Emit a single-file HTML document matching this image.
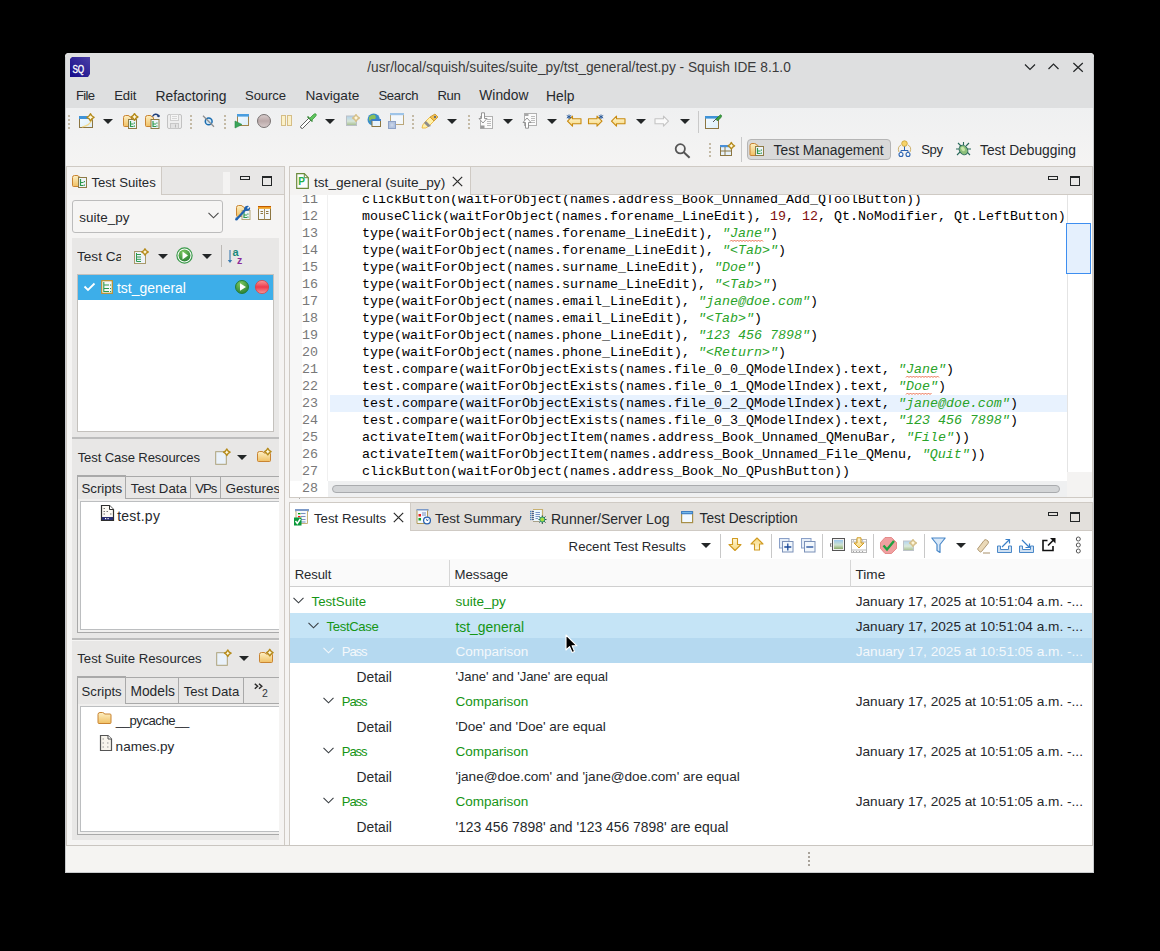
<!DOCTYPE html><html><head><meta charset="utf-8"><style>
*{margin:0;padding:0;box-sizing:border-box}
html,body{width:1160px;height:951px;overflow:hidden;background:#000}
body{position:relative;font-family:"Liberation Sans",sans-serif}
.a{position:absolute}
.t{position:absolute;white-space:nowrap;line-height:16px;font-family:"Liberation Sans",sans-serif}
.m{position:absolute;white-space:pre;font-family:"Liberation Mono",monospace;font-size:13.33px;line-height:17px;color:#000}
svg{position:absolute;overflow:visible}
</style></head><body>
<div class="a" style="left:65px;top:53px;width:1029px;height:820px;background:#f5f4f3;border-radius:4px 4px 0 0;"></div>
<div class="a" style="left:65px;top:53px;width:1029px;height:55px;background:#dedfe0;border-radius:4px 4px 0 0;"></div>
<svg style="left:70px;top:57px" width="20" height="20" viewBox="0 0 20 20"><defs><linearGradient id="sqg" x1="0" y1="1" x2="1" y2="0"><stop offset="0" stop-color="#140a8a"/><stop offset="1" stop-color="#4b3fa6"/></linearGradient></defs><path d="M2 0H20V17L18 20H0V2Z" fill="url(#sqg)"/><text x="2.4" y="16.1" font-family="Liberation Sans" font-size="10" fill="#fff" stroke="#fff" stroke-width="0.35" textLength="11.8" lengthAdjust="spacingAndGlyphs">SQ</text></svg>
<div class="t" style="left:367.3px;top:60px;font-size:13.71px;color:#3b3b3b;">/usr/local/squish/suites/suite_py/tst_general/test.py - Squish IDE 8.1.0</div>
<svg style="left:1024px;top:63px" width="60" height="10" viewBox="0 0 60 10" fill="none" stroke="#232627" stroke-width="1.2"><path d="M1 1.5L6 6.5L11 1.5"/><path d="M24.5 6L29.5 1L34.5 6"/><path d="M49.4 0L58.8 8.8M58.8 0L49.4 8.8"/></svg>
<div class="t" style="left:75.9px;top:88px;font-size:13.1px;color:#26292d;letter-spacing:-0.668px;">File</div>
<div class="t" style="left:114.3px;top:88px;font-size:13.1px;color:#26292d;letter-spacing:-0.157px;">Edit</div>
<div class="t" style="left:155.4px;top:88px;font-size:13.88px;color:#26292d;">Refactoring</div>
<div class="t" style="left:245.0px;top:88px;font-size:13.1px;color:#26292d;letter-spacing:-0.1px;">Source</div>
<div class="t" style="left:305.5px;top:88px;font-size:13.63px;color:#26292d;">Navigate</div>
<div class="t" style="left:378.4px;top:88px;font-size:13.1px;color:#26292d;letter-spacing:-0.28px;">Search</div>
<div class="t" style="left:437.4px;top:88px;font-size:13.1px;color:#26292d;letter-spacing:-0.363px;">Run</div>
<div class="t" style="left:479.3px;top:88px;font-size:13.8px;color:#26292d;">Window</div>
<div class="t" style="left:546.0px;top:88px;font-size:13.86px;color:#26292d;">Help</div>
<div class="a" style="left:65px;top:108px;width:1029px;height:58px;background:linear-gradient(#eff0f1,#f5f4f3);"></div>
<div class="a" style="left:66px;top:166px;width:219px;height:680px;border:1px solid #cfcac4;background:#f5f4f3;"></div>
<div class="a" style="left:67px;top:167px;width:217px;height:28px;background:#e8e7e6;border-bottom:1px solid #cfcac4;"></div>
<div class="a" style="left:67px;top:167px;width:95px;height:28px;background:#f4f3f2;border-right:1px solid #cfcac4;"></div>
<div class="a" style="left:223px;top:172px;width:7px;height:22px;background:#f4f3f2;"></div>
<div class="t" style="left:91.4px;top:175px;font-size:13.17px;color:#26292d;">Test Suites</div>
<div class="a" style="left:72px;top:200px;width:151px;height:33px;border:1px solid #bcbcbc;border-radius:3px;background:#f6f5f4;"></div>
<div class="t" style="left:79.3px;top:210px;font-size:13.45px;color:#26292d;">suite_py</div>
<svg style="left:208px;top:212px" width="11" height="7" viewBox="0 0 11 7" fill="none" stroke="#4a4a4a" stroke-width="1.1"><path d="M0.5 0.8L5.5 5.8L10.5 0.8"/></svg>
<div class="a" style="left:72px;top:238px;width:207px;height:199px;background:#e8e7e6;"></div>
<div class="t" style="left:77px;top:249px;font-size:13.6px;color:#26292d;width:44px;overflow:hidden;">Test Cases</div>
<div class="a" style="left:221px;top:245px;width:1px;height:22px;background:#bdbab6;"></div>
<div class="a" style="left:77px;top:274px;width:197px;height:158px;background:#fff;border:1px solid #c4c1bd;"></div>
<div class="a" style="left:78px;top:275px;width:195px;height:25px;background:#3daee9;"></div>
<div class="t" style="left:117.0px;top:280px;font-size:13.95px;color:#fff;">tst_general</div>
<div class="a" style="left:72px;top:439px;width:207px;height:200px;background:#e8e7e6;"></div>
<div class="t" style="left:77.7px;top:450px;font-size:13.1px;color:#26292d;letter-spacing:-0.122px;">Test Case Resources</div>
<div class="a" style="left:72px;top:437px;width:207px;height:2px;background:#bdbdbd;"></div><div class="a" style="left:125px;top:476px;width:154px;height:23px;border-top:1px solid #a9a9a9;border-bottom:1px solid #a9a9a9;"></div><div class="a" style="left:190px;top:476px;width:1px;height:23px;background:#a9a9a9;"></div><div class="a" style="left:220px;top:476px;width:1px;height:23px;background:#a9a9a9;"></div><div class="a" style="left:299px;top:476px;width:1px;height:23px;background:#a9a9a9;"></div><div class="a" style="left:77px;top:475px;width:49px;height:24px;border:1px solid #a9a9a9;border-top:2px solid #a9a9a9;border-bottom:none;"></div><div class="a" style="left:77px;top:499px;width:203px;height:134px;border:1px solid #a9a9a9;border-top:none;border-right:none;background:#f0efee;"></div><div class="a" style="left:80px;top:501px;width:199px;height:129px;border:1px solid #bcbec0;border-right:none;background:#fff;"></div><div class="t" style="left:81.4px;top:481px;font-size:13.32px;color:#26292d;">Scripts</div><div class="t" style="left:130.8px;top:481px;font-size:13.28px;color:#26292d;">Test Data</div><div class="t" style="left:195.2px;top:481px;font-size:13.1px;color:#26292d;letter-spacing:-1.013px;">VPs</div><div class="t" style="left:225.5px;top:481px;font-size:13.5px;color:#26292d;">Gestures</div>
<div class="a" style="left:279px;top:470px;width:5px;height:170px;background:#f5f4f3;"></div>
<div class="t" style="left:117.2px;top:508px;font-size:14.0px;color:#26292d;letter-spacing:0.243px;">test.py</div>
<div class="a" style="left:72px;top:641px;width:207px;height:199px;background:#e8e7e6;"></div>
<div class="t" style="left:77.3px;top:651px;font-size:13.17px;color:#26292d;">Test Suite Resources</div>
<div class="a" style="left:72px;top:638px;width:207px;height:2px;background:#bdbdbd;"></div><div class="a" style="left:125px;top:677px;width:154px;height:27px;border-top:1px solid #a9a9a9;border-bottom:1px solid #a9a9a9;"></div><div class="a" style="left:178px;top:677px;width:1px;height:27px;background:#a9a9a9;"></div><div class="a" style="left:243px;top:677px;width:1px;height:27px;background:#a9a9a9;"></div><div class="a" style="left:299px;top:677px;width:1px;height:27px;background:#a9a9a9;"></div><div class="a" style="left:77px;top:676px;width:49px;height:28px;border:1px solid #a9a9a9;border-top:2px solid #a9a9a9;border-bottom:none;"></div><div class="a" style="left:77px;top:704px;width:203px;height:131px;border:1px solid #a9a9a9;border-top:none;border-right:none;background:#f0efee;"></div><div class="a" style="left:80px;top:706px;width:199px;height:126px;border:1px solid #bcbec0;border-right:none;background:#fff;"></div><div class="t" style="left:81.6px;top:684px;font-size:13.12px;color:#26292d;">Scripts</div><div class="t" style="left:130.5px;top:684px;font-size:13.77px;color:#26292d;">Models</div><div class="t" style="left:183.7px;top:684px;font-size:13.18px;color:#26292d;">Test Data</div>
<div class="a" style="left:279px;top:670px;width:5px;height:170px;background:#f5f4f3;"></div>
<div class="t" style="left:115.81px;top:713px;font-size:13.1px;color:#26292d;letter-spacing:-0.45px;">__pycache__</div>
<div class="t" style="left:115.6px;top:739px;font-size:13.56px;color:#26292d;">names.py</div>
<div class="a" style="left:289px;top:166px;width:804px;height:332px;border:1px solid #cfcac4;background:#fff;"></div>
<div class="a" style="left:290px;top:167px;width:802px;height:28px;background:#e8e7e6;border-bottom:1px solid #cfcac4;"></div>
<div class="a" style="left:290px;top:167px;width:181px;height:28px;background:#f4f3f2;border-right:1px solid #cfcac4;"></div>
<div class="t" style="left:314.0px;top:175px;font-size:13.65px;color:#26292d;">tst_general (suite_py)</div>
<div class="a" style="left:290px;top:195px;width:12px;height:286px;background:#f7f7f7;"></div>
<div class="a" style="left:327px;top:195px;width:1px;height:286px;background:#f0f0f0;"></div>
<div class="a" style="left:290px;top:195px;width:777px;height:302px;overflow:hidden">
<div class="a" style="left:40px;top:200px;width:737px;height:17px;background:#e8f2fe;"></div>
<div class="m" style="left:12px;top:-4px;color:#787878">11</div>
<div class="m" style="left:72px;top:-4px">clickButton(waitForObject(names.address_Book_Unnamed_Add_QToolButton))</div>
<div class="m" style="left:12px;top:13px;color:#787878">12</div>
<div class="m" style="left:72px;top:13px">mouseClick(waitForObject(names.forename_LineEdit), <span style="color:#7f1010">19</span>, <span style="color:#7f1010">12</span>, Qt.NoModifier, Qt.LeftButton)</div>
<div class="m" style="left:12px;top:30px;color:#787878">13</div>
<div class="m" style="left:72px;top:30px">type(waitForObject(names.forename_LineEdit), <i style="color:#2aa32a">&quot;Jane&quot;</i>)</div>
<div class="m" style="left:12px;top:47px;color:#787878">14</div>
<div class="m" style="left:72px;top:47px">type(waitForObject(names.forename_LineEdit), <i style="color:#2aa32a">&quot;&lt;Tab&gt;&quot;</i>)</div>
<div class="m" style="left:12px;top:64px;color:#787878">15</div>
<div class="m" style="left:72px;top:64px">type(waitForObject(names.surname_LineEdit), <i style="color:#2aa32a">&quot;Doe&quot;</i>)</div>
<div class="m" style="left:12px;top:81px;color:#787878">16</div>
<div class="m" style="left:72px;top:81px">type(waitForObject(names.surname_LineEdit), <i style="color:#2aa32a">&quot;&lt;Tab&gt;&quot;</i>)</div>
<div class="m" style="left:12px;top:98px;color:#787878">17</div>
<div class="m" style="left:72px;top:98px">type(waitForObject(names.email_LineEdit), <i style="color:#2aa32a">&quot;jane@doe.com&quot;</i>)</div>
<div class="m" style="left:12px;top:115px;color:#787878">18</div>
<div class="m" style="left:72px;top:115px">type(waitForObject(names.email_LineEdit), <i style="color:#2aa32a">&quot;&lt;Tab&gt;&quot;</i>)</div>
<div class="m" style="left:12px;top:132px;color:#787878">19</div>
<div class="m" style="left:72px;top:132px">type(waitForObject(names.phone_LineEdit), <i style="color:#2aa32a">&quot;123 456 7898&quot;</i>)</div>
<div class="m" style="left:12px;top:149px;color:#787878">20</div>
<div class="m" style="left:72px;top:149px">type(waitForObject(names.phone_LineEdit), <i style="color:#2aa32a">&quot;&lt;Return&gt;&quot;</i>)</div>
<div class="m" style="left:12px;top:166px;color:#787878">21</div>
<div class="m" style="left:72px;top:166px">test.compare(waitForObjectExists(names.file_0_0_QModelIndex).text, <i style="color:#2aa32a">&quot;Jane&quot;</i>)</div>
<div class="m" style="left:12px;top:183px;color:#787878">22</div>
<div class="m" style="left:72px;top:183px">test.compare(waitForObjectExists(names.file_0_1_QModelIndex).text, <i style="color:#2aa32a">&quot;Doe&quot;</i>)</div>
<div class="m" style="left:12px;top:200px;color:#787878">23</div>
<div class="m" style="left:72px;top:200px">test.compare(waitForObjectExists(names.file_0_2_QModelIndex).text, <i style="color:#2aa32a">&quot;jane@doe.com&quot;</i>)</div>
<div class="m" style="left:12px;top:217px;color:#787878">24</div>
<div class="m" style="left:72px;top:217px">test.compare(waitForObjectExists(names.file_0_3_QModelIndex).text, <i style="color:#2aa32a">&quot;123 456 7898&quot;</i>)</div>
<div class="m" style="left:12px;top:234px;color:#787878">25</div>
<div class="m" style="left:72px;top:234px">activateItem(waitForObjectItem(names.address_Book_Unnamed_QMenuBar, <i style="color:#2aa32a">&quot;File&quot;</i>))</div>
<div class="m" style="left:12px;top:251px;color:#787878">26</div>
<div class="m" style="left:72px;top:251px">activateItem(waitForObjectItem(names.address_Book_Unnamed_File_QMenu, <i style="color:#2aa32a">&quot;Quit&quot;</i>))</div>
<div class="m" style="left:12px;top:268px;color:#787878">27</div>
<div class="m" style="left:72px;top:268px">clickButton(waitForObject(names.address_Book_No_QPushButton))</div>
<div class="m" style="left:12px;top:285px;color:#787878">28</div>
</div>
<svg style="left:0;top:0" width="1160" height="951"><path d="M730 241.5 l1.5 -1.5 l1.5 1.5 l1.5 -1.5 l1.5 1.5 l1.5 -1.5 l1.5 1.5 l1.5 -1.5 l1.5 1.5 l1.5 -1.5 l1.5 1.5 l1.5 -1.5 l1.5 1.5 l1.5 -1.5 l1.5 1.5 l1.5 -1.5 l1.5 1.5 l1.5 -1.5 l1.5 1.5 l1.5 -1.5 l1.5 1.5 l1.5 -1.5 l1.5 1.5" fill="none" stroke="#e8603c" stroke-width="0.9"/></svg>
<svg style="left:0;top:0" width="1160" height="951"><path d="M906 377.5 l1.5 -1.5 l1.5 1.5 l1.5 -1.5 l1.5 1.5 l1.5 -1.5 l1.5 1.5 l1.5 -1.5 l1.5 1.5 l1.5 -1.5 l1.5 1.5 l1.5 -1.5 l1.5 1.5 l1.5 -1.5 l1.5 1.5 l1.5 -1.5 l1.5 1.5 l1.5 -1.5 l1.5 1.5 l1.5 -1.5 l1.5 1.5 l1.5 -1.5 l1.5 1.5" fill="none" stroke="#e8603c" stroke-width="0.9"/></svg>
<svg style="left:0;top:0" width="1160" height="951"><path d="M906 394.5 l1.5 -1.5 l1.5 1.5 l1.5 -1.5 l1.5 1.5 l1.5 -1.5 l1.5 1.5 l1.5 -1.5 l1.5 1.5 l1.5 -1.5 l1.5 1.5 l1.5 -1.5 l1.5 1.5 l1.5 -1.5 l1.5 1.5 l1.5 -1.5 l1.5 1.5 l1.5 -1.5" fill="none" stroke="#e8603c" stroke-width="0.9"/></svg>
<div class="a" style="left:1067px;top:195px;width:1px;height:277px;background:#e4e4e4;"></div>
<div class="a" style="left:1067px;top:472px;width:25px;height:25px;background:#f4f3f2;"></div>
<div class="a" style="left:328px;top:481px;width:739px;height:16px;background:#eff0f1;"></div>
<div class="a" style="left:332px;top:485px;width:728px;height:8px;background:#d3d5d7;border:1px solid #a9abae;border-radius:4px;"></div>
<div class="a" style="left:1066px;top:223px;width:25px;height:51px;background:#e5f0fd;border:1.5px solid #3d8ef0;"></div>
<div class="a" style="left:289px;top:502px;width:804px;height:344px;border:1px solid #cfcac4;background:#fff;"></div>
<div class="a" style="left:290px;top:503px;width:802px;height:28px;background:#e3e0dc;border-bottom:1px solid #cfcac4;"></div>
<div class="a" style="left:290px;top:503px;width:121px;height:28px;background:#fff;border-right:1px solid #d0ccc6;"></div>
<div class="t" style="left:314.0px;top:511px;font-size:13.22px;color:#26292d;">Test Results</div>
<div class="t" style="left:435.0px;top:511px;font-size:13.55px;color:#26292d;">Test Summary</div>
<div class="t" style="left:551.0px;top:511px;font-size:14.0px;color:#26292d;letter-spacing:0.013px;">Runner/Server Log</div>
<div class="t" style="left:699.5px;top:511px;font-size:13.8px;color:#26292d;">Test Description</div>
<div class="t" style="left:568.6px;top:538.5px;font-size:13.21px;color:#26292d;">Recent Test Results</div>
<div class="a" style="left:290px;top:559px;width:802px;height:28px;background:#fafafa;border-bottom:1px solid #cfcfcf;"></div>
<div class="a" style="left:449px;top:560px;width:1px;height:27px;background:#d6d6d6;"></div>
<div class="a" style="left:850px;top:560px;width:1px;height:27px;background:#d6d6d6;"></div>
<div class="t" style="left:294.7px;top:567px;font-size:13.1px;color:#26292d;letter-spacing:-0.105px;">Result</div>
<div class="t" style="left:454.5px;top:567px;font-size:13.21px;color:#26292d;">Message</div>
<div class="t" style="left:855.5px;top:567px;font-size:13.6px;color:#26292d;">Time</div>
<svg style="left:293px;top:597px" width="11" height="7" viewBox="0 0 11 7" fill="none" stroke="#3a3f44" stroke-width="1.1"><path d="M0.5 0.8L5.5 5.8L10.5 0.8"/></svg>
<div class="t" style="left:311.5px;top:594px;font-size:13.25px;color:#159515;">TestSuite</div>
<div class="t" style="left:455.4px;top:594px;font-size:13.53px;color:#159515;">suite_py</div>
<div class="t" style="left:855.7px;top:594px;font-size:13.63px;color:#26292d;">January 17, 2025 at 10:51:04 a.m. -...</div>
<div class="a" style="left:290px;top:613px;width:802px;height:25px;background:#c5e4f6;"></div>
<svg style="left:308px;top:622px" width="11" height="7" viewBox="0 0 11 7" fill="none" stroke="#3a3f44" stroke-width="1.1"><path d="M0.5 0.8L5.5 5.8L10.5 0.8"/></svg>
<div class="t" style="left:326.6px;top:619px;font-size:13.1px;color:#159515;letter-spacing:-0.343px;">TestCase</div>
<div class="t" style="left:455.4px;top:619px;font-size:13.9px;color:#159515;">tst_general</div>
<div class="t" style="left:855.7px;top:619px;font-size:13.63px;color:#26292d;">January 17, 2025 at 10:51:04 a.m. -...</div>
<div class="a" style="left:290px;top:638px;width:802px;height:25px;background:#b5d9f0;"></div>
<svg style="left:323px;top:647px" width="11" height="7" viewBox="0 0 11 7" fill="none" stroke="#f4f8fb" stroke-width="1.1"><path d="M0.5 0.8L5.5 5.8L10.5 0.8"/></svg>
<div class="t" style="left:341.8px;top:644px;font-size:13.1px;color:#f4f8fb;letter-spacing:-1.107px;">Pass</div>
<div class="t" style="left:455.4px;top:644px;font-size:13.52px;color:#f4f8fb;">Comparison</div>
<div class="t" style="left:855.7px;top:644px;font-size:13.63px;color:#f4f8fb;">January 17, 2025 at 10:51:05 a.m. -...</div>
<div class="t" style="left:356.5px;top:669px;font-size:13.84px;color:#26292d;">Detail</div>
<div class="t" style="left:455.4px;top:669px;font-size:13.1px;color:#26292d;letter-spacing:-0.063px;">&#x27;Jane&#x27; and &#x27;Jane&#x27; are equal</div>
<svg style="left:323px;top:697px" width="11" height="7" viewBox="0 0 11 7" fill="none" stroke="#3a3f44" stroke-width="1.1"><path d="M0.5 0.8L5.5 5.8L10.5 0.8"/></svg>
<div class="t" style="left:341.8px;top:694px;font-size:13.1px;color:#159515;letter-spacing:-1.107px;">Pass</div>
<div class="t" style="left:455.4px;top:694px;font-size:13.52px;color:#159515;">Comparison</div>
<div class="t" style="left:855.7px;top:694px;font-size:13.63px;color:#26292d;">January 17, 2025 at 10:51:05 a.m. -...</div>
<div class="t" style="left:356.5px;top:719px;font-size:13.84px;color:#26292d;">Detail</div>
<div class="t" style="left:455.4px;top:719px;font-size:13.55px;color:#26292d;">&#x27;Doe&#x27; and &#x27;Doe&#x27; are equal</div>
<svg style="left:323px;top:747px" width="11" height="7" viewBox="0 0 11 7" fill="none" stroke="#3a3f44" stroke-width="1.1"><path d="M0.5 0.8L5.5 5.8L10.5 0.8"/></svg>
<div class="t" style="left:341.8px;top:744px;font-size:13.1px;color:#159515;letter-spacing:-1.107px;">Pass</div>
<div class="t" style="left:455.4px;top:744px;font-size:13.52px;color:#159515;">Comparison</div>
<div class="t" style="left:855.7px;top:744px;font-size:13.63px;color:#26292d;">January 17, 2025 at 10:51:05 a.m. -...</div>
<div class="t" style="left:356.5px;top:769px;font-size:13.84px;color:#26292d;">Detail</div>
<div class="t" style="left:455.4px;top:769px;font-size:13.6px;color:#26292d;">&#x27;jane@doe.com&#x27; and &#x27;jane@doe.com&#x27; are equal</div>
<svg style="left:323px;top:797px" width="11" height="7" viewBox="0 0 11 7" fill="none" stroke="#3a3f44" stroke-width="1.1"><path d="M0.5 0.8L5.5 5.8L10.5 0.8"/></svg>
<div class="t" style="left:341.8px;top:794px;font-size:13.1px;color:#159515;letter-spacing:-1.107px;">Pass</div>
<div class="t" style="left:455.4px;top:794px;font-size:13.52px;color:#159515;">Comparison</div>
<div class="t" style="left:855.7px;top:794px;font-size:13.63px;color:#26292d;">January 17, 2025 at 10:51:05 a.m. -...</div>
<div class="t" style="left:356.5px;top:819px;font-size:13.84px;color:#26292d;">Detail</div>
<div class="t" style="left:455.4px;top:819px;font-size:13.88px;color:#26292d;">&#x27;123 456 7898&#x27; and &#x27;123 456 7898&#x27; are equal</div>
<div class="a" style="left:65px;top:845px;width:1029px;height:28px;background:#f5f4f2;border-top:1px solid #c9c5c0;"></div>
<div class="a" style="left:808px;top:852px;width:2px;height:2px;background:#a9a39b;"></div>
<div class="a" style="left:808px;top:856px;width:2px;height:2px;background:#a9a39b;"></div>
<div class="a" style="left:808px;top:860px;width:2px;height:2px;background:#a9a39b;"></div>
<div class="a" style="left:808px;top:864px;width:2px;height:2px;background:#a9a39b;"></div>
<svg width="0" height="0" style="position:absolute"><defs>
<linearGradient id="gfold" x1="0" y1="0" x2="0" y2="1"><stop offset="0" stop-color="#fdf0c4"/><stop offset="1" stop-color="#f0c064"/></linearGradient>
<linearGradient id="gwin" x1="0" y1="0" x2="1" y2="1"><stop offset="0" stop-color="#f4fbff"/><stop offset="1" stop-color="#dceefa"/></linearGradient>
<linearGradient id="garrow" x1="0" y1="0" x2="0" y2="1"><stop offset="0" stop-color="#fff8d8"/><stop offset="1" stop-color="#f6d77e"/></linearGradient>
<radialGradient id="ggreen" cx="0.4" cy="0.25" r="0.85"><stop offset="0" stop-color="#7cc860"/><stop offset="1" stop-color="#237a30"/></radialGradient>
<linearGradient id="gred" x1="0" y1="0" x2="0" y2="1"><stop offset="0" stop-color="#f49a9a"/><stop offset="0.5" stop-color="#ee3a4c"/><stop offset="1" stop-color="#f49a9a"/></linearGradient>
<linearGradient id="ggray" x1="0" y1="0" x2="0" y2="1"><stop offset="0" stop-color="#d8cccc"/><stop offset="0.5" stop-color="#bba9a9"/><stop offset="1" stop-color="#d8cccc"/></linearGradient>
<linearGradient id="gimg" x1="0" y1="0" x2="0" y2="1"><stop offset="0" stop-color="#9cc8ec"/><stop offset="0.55" stop-color="#cfe3d0"/><stop offset="1" stop-color="#8aaa6a"/></linearGradient>
</defs></svg>
<div class="a" style="left:67.5px;top:114.5px;width:2px;height:2px;background:#c4baa6;"></div><div class="a" style="left:67.5px;top:118.7px;width:2px;height:2px;background:#c4baa6;"></div><div class="a" style="left:67.5px;top:122.9px;width:2px;height:2px;background:#c4baa6;"></div><div class="a" style="left:67.5px;top:127.1px;width:2px;height:2px;background:#c4baa6;"></div>
<svg style="left:78px;top:111px" width="18" height="18" viewBox="0 0 18 18"><rect x="1.5" y="5.5" width="13" height="11" fill="url(#gwin)" stroke="#8c7642"/><rect x="1" y="5" width="14" height="3" fill="#3f93d8"/><path d="M4 16C10 15 13 12 14 8" stroke="#f3d98a" fill="none" stroke-width="1.2"/><path d="M12.5 2.6999999999999997Q13.508000000000001 5.292 16.1 6.3Q13.508000000000001 7.308 12.5 9.9Q11.491999999999999 7.308 8.9 6.3Q11.491999999999999 5.292 12.5 2.6999999999999997Z" fill="#fff8dc" stroke="#b58b1c" stroke-width="1.4" stroke-linejoin="round"/></svg>
<svg style="left:103px;top:119px" width="10" height="5" viewBox="0 0 10 5"><path d="M0 0H10L5.0 5Z" fill="#232627"/></svg>
<svg style="left:122px;top:112px" width="17" height="18" viewBox="0 0 17 18"><path d="M1.5 5.5q0-2 2-2h2.5q1.5 0 2 1.5h0.5q1 0 1 1v7.5q0 1-1 1h-6q-1 0-1-1z" fill="url(#gfold)" stroke="#c98432" stroke-width="1"/><rect x="6.5" y="7.5" width="8" height="9" fill="#eef3f8" stroke="#8e7c46" stroke-width="1"/><path d="M8.5 9V14.5H11.5M8.5 12.0H11.5" fill="none" stroke="#2e9a4e" stroke-width="1.2"/><rect x="11.8" y="10.5" width="1.2" height="1.2" fill="#2e9a4e"/><rect x="11.8" y="13.5" width="1.2" height="1.2" fill="#2e9a4e"/><path d="M12.5 1.6Q13.452 4.048 15.9 5Q13.452 5.952 12.5 8.4Q11.548 5.952 9.1 5Q11.548 4.048 12.5 1.6Z" fill="#fff8dc" stroke="#b58b1c" stroke-width="1.4" stroke-linejoin="round"/></svg>
<svg style="left:144px;top:111px" width="17" height="19" viewBox="0 0 17 19"><path d="M1.5 6.5q0-2 2-2h2.5q1.5 0 2 1.5h0.5q1 0 1 1v7.5q0 1-1 1h-6q-1 0-1-1z" fill="url(#gfold)" stroke="#c98432" stroke-width="1"/><rect x="7.0" y="8.5" width="8" height="9" fill="#eef3f8" stroke="#8e7c46" stroke-width="1"/><path d="M9.0 10V15.5H12.0M9.0 13.0H12.0" fill="none" stroke="#2e9a4e" stroke-width="1.2"/><rect x="12.3" y="11.5" width="1.2" height="1.2" fill="#2e9a4e"/><rect x="12.3" y="14.5" width="1.2" height="1.2" fill="#2e9a4e"/><path d="M8.5 5.5q2.5-4 6-1" fill="none" stroke="#1f3f7a" stroke-width="1.4"/><circle cx="14.5" cy="5" r="1.3" fill="#1f3f7a"/></svg>
<svg style="left:167px;top:114px" width="15" height="15" viewBox="0 0 15 15"><rect x="0.5" y="0.5" width="14" height="14" rx="1.5" fill="#eeeeee" stroke="#c2c2c2"/><rect x="3.5" y="0.5" width="8" height="6" fill="#f6f6f6" stroke="#cfcfcf"/><path d="M5 2.5H10M5 4.5H10" stroke="#d6d6d6"/><rect x="3.5" y="9.5" width="8" height="5" fill="#e2e2e2" stroke="#c8c8c8"/><rect x="8" y="10.5" width="1" height="3" fill="#b8b8b8"/></svg>
<div class="a" style="left:189.5px;top:114.5px;width:2px;height:2px;background:#c4baa6;"></div><div class="a" style="left:189.5px;top:118.7px;width:2px;height:2px;background:#c4baa6;"></div><div class="a" style="left:189.5px;top:122.9px;width:2px;height:2px;background:#c4baa6;"></div><div class="a" style="left:189.5px;top:127.1px;width:2px;height:2px;background:#c4baa6;"></div>
<svg style="left:202px;top:115px" width="13" height="13" viewBox="0 0 13 13"><circle cx="6.7" cy="6.4" r="3.4" fill="#cfe6f6" stroke="#1b6db0" stroke-width="1.5"/><path d="M1 0.8L12 11.8" stroke="#8e8e8e" stroke-width="1.3"/></svg>
<div class="a" style="left:223.5px;top:114.5px;width:2px;height:2px;background:#c4baa6;"></div><div class="a" style="left:223.5px;top:118.7px;width:2px;height:2px;background:#c4baa6;"></div><div class="a" style="left:223.5px;top:122.9px;width:2px;height:2px;background:#c4baa6;"></div><div class="a" style="left:223.5px;top:127.1px;width:2px;height:2px;background:#c4baa6;"></div>
<svg style="left:234px;top:113px" width="16" height="16" viewBox="0 0 16 16"><rect x="3.5" y="1.5" width="11" height="11" fill="url(#gwin)" stroke="#a2844a"/><rect x="3" y="1" width="12" height="2.6" fill="#4a9ee0"/><path d="M1 8L8 11.5L1 15Z" fill="#3aa55a" stroke="#2a8a46" stroke-width="0.6"/></svg>
<svg style="left:256px;top:113px" width="16" height="16" viewBox="0 0 16 16"><circle cx="8" cy="8" r="6.5" fill="url(#ggray)" stroke="#7a7474" stroke-width="1"/></svg>
<svg style="left:280px;top:114px" width="13" height="13" viewBox="0 0 13 13"><rect x="1.5" y="1.5" width="4" height="10" fill="#fbf1c9" stroke="#d5bd86"/><rect x="7.5" y="1.5" width="4" height="10" fill="#fbf1c9" stroke="#d5bd86"/></svg>
<svg style="left:299px;top:112px" width="18" height="18" viewBox="0 0 18 18"><path d="M2 16L1.5 14.5L10 6L12 8L3.5 16.5Z" fill="#fff" stroke="#4d4d4d" stroke-width="0.9"/><path d="M8.5 4.5L13.5 9.5" stroke="#3a8a3a" stroke-width="1.6"/><path d="M10.5 6.5L14 3Q16 1 17 2Q18 3 16 5L12.5 8.5Z" fill="#5fc35f" stroke="#3a9a3a" stroke-width="0.8"/></svg>
<svg style="left:325px;top:119px" width="10" height="5" viewBox="0 0 10 5"><path d="M0 0H10L5.0 5Z" fill="#232627"/></svg>
<svg style="left:345px;top:113px" width="16" height="15" viewBox="0 0 16 15"><g opacity="0.75"><rect x="1.5" y="3" width="10" height="9.5" fill="url(#gimg)" stroke="#a8b0b8"/></g><path d="M11 1.6Q11.952 4.048 14.4 5Q11.952 5.952 11 8.4Q10.048 5.952 7.6 5Q10.048 4.048 11 1.6Z" fill="#fff8dc" stroke="#d6c08a" stroke-width="1.4" stroke-linejoin="round"/></svg>
<svg style="left:367px;top:113px" width="15" height="15" viewBox="0 0 15 15"><circle cx="6.7" cy="6.7" r="6.2" fill="#3b8fc8"/><path d="M2 4Q5 1 8 2Q10 5 7 7Q4 6 2 8Z" fill="#8ac05a"/><rect x="5" y="6.5" width="8.5" height="7" fill="#e8f3fb" stroke="#8c7642"/><rect x="4.5" y="6" width="9.5" height="2" fill="#3f7fcc"/></svg>
<svg style="left:387px;top:112px" width="18" height="18" viewBox="0 0 18 18"><rect x="3.5" y="1.5" width="13" height="11" fill="#f3f7fa" stroke="#bba77a"/><rect x="3" y="1" width="14" height="2.2" fill="#9ec4e8"/><rect x="1.5" y="9.5" width="7" height="7" fill="#b3c3de" stroke="#8ea2c7"/><rect x="3.5" y="11.5" width="3" height="3" fill="#c8d4e8"/></svg>
<div class="a" style="left:411.5px;top:114.5px;width:2px;height:2px;background:#c4baa6;"></div><div class="a" style="left:411.5px;top:118.7px;width:2px;height:2px;background:#c4baa6;"></div><div class="a" style="left:411.5px;top:122.9px;width:2px;height:2px;background:#c4baa6;"></div><div class="a" style="left:411.5px;top:127.1px;width:2px;height:2px;background:#c4baa6;"></div>
<svg style="left:421px;top:113px" width="18" height="16" viewBox="0 0 18 16"><path d="M1 15Q1 12 4 9L9 4L13 8L8 13Q5 16 1 15Z" fill="#fff0a8" stroke="#e8b030" stroke-width="0.8"/><path d="M5 8L10 13L7 14L3 10Z" fill="#8c8c8c"/><path d="M9 4L14 1L17 4L13 8Z" fill="#f0c050" stroke="#c8902a" stroke-width="0.8"/><circle cx="14" cy="4" r="0.9" fill="#2a4a8a"/></svg>
<svg style="left:447px;top:119px" width="10" height="5" viewBox="0 0 10 5"><path d="M0 0H10L5.0 5Z" fill="#232627"/></svg>
<div class="a" style="left:467.5px;top:114.5px;width:2px;height:2px;background:#c4baa6;"></div><div class="a" style="left:467.5px;top:118.7px;width:2px;height:2px;background:#c4baa6;"></div><div class="a" style="left:467.5px;top:122.9px;width:2px;height:2px;background:#c4baa6;"></div><div class="a" style="left:467.5px;top:127.1px;width:2px;height:2px;background:#c4baa6;"></div>
<svg style="left:478px;top:112px" width="16" height="17" viewBox="0 0 16 17"><rect x="2.5" y="4.5" width="12" height="12" fill="#fbfbfb" stroke="#b0b0b0"/><path d="M9 7.5H13M9 9.5H13M9 11.5H13M9 13.5H13" stroke="#b4b4b4" stroke-width="0.9"/><rect x="2.5" y="13.5" width="4" height="3" fill="#9a9a9a"/><path d="M3.5 0.8H6.5V6.5H9L5 11L1 6.5H3.5Z" fill="#fff" stroke="#8a8a8a" stroke-width="0.9" stroke-linejoin="round"/></svg>
<svg style="left:503px;top:119px" width="10" height="5" viewBox="0 0 10 5"><path d="M0 0H10L5.0 5Z" fill="#232627"/></svg>
<svg style="left:522px;top:112px" width="16" height="17" viewBox="0 0 16 17"><rect x="2.5" y="1.5" width="12" height="12" fill="#fbfbfb" stroke="#b0b0b0"/><path d="M9 4.5H13M9 6.5H13M9 8.5H13M9 10.5H13" stroke="#b4b4b4" stroke-width="0.9"/><rect x="2.5" y="1.5" width="4" height="2.5" fill="#a8a8a8"/><path d="M3.5 16.2H6.5V10.5H9L5 6L1 10.5H3.5Z" fill="#fff" stroke="#8a8a8a" stroke-width="0.9" stroke-linejoin="round"/></svg>
<svg style="left:547px;top:119px" width="10" height="5" viewBox="0 0 10 5"><path d="M0 0H10L5.0 5Z" fill="#232627"/></svg>
<svg style="left:566px;top:114px" width="16" height="14" viewBox="0 0 16 14"><path d="M1 6L6 1V3.5H14.5V8.5H6V11Z" transform="translate(0.5,1.2)" fill="url(#garrow)" stroke="#c88a10" stroke-width="1.1" stroke-linejoin="round"/><path d="M3 0.5V5M0.8 1.5L5.2 4M0.8 4L5.2 1.5" stroke="#2a5a9a" stroke-width="1"/></svg>
<svg style="left:587px;top:114px" width="17" height="14" viewBox="0 0 17 14"><path d="M1 6L6 1V3.5H14.5V8.5H6V11Z" transform="translate(16,1.2) scale(-1,1)" fill="url(#garrow)" stroke="#c88a10" stroke-width="1.1" stroke-linejoin="round"/><path d="M14 0.5V5M11.8 1.5L16.2 4M11.8 4L16.2 1.5" stroke="#2a5a9a" stroke-width="1"/></svg>
<svg style="left:610px;top:114px" width="16" height="14" viewBox="0 0 16 14"><path d="M1 6L6 1V3.5H14.5V8.5H6V11Z" transform="translate(0.5,1.2)" fill="url(#garrow)" stroke="#c88a10" stroke-width="1.1" stroke-linejoin="round"/></svg>
<svg style="left:636px;top:119px" width="10" height="5" viewBox="0 0 10 5"><path d="M0 0H10L5.0 5Z" fill="#232627"/></svg>
<svg style="left:654px;top:114px" width="16" height="14" viewBox="0 0 16 14"><path d="M1 6L6 1V3.5H14.5V8.5H6V11Z" transform="translate(15.5,1.2) scale(-1,1)" fill="#fafafa" stroke="#c4c4c4" stroke-width="1.1" stroke-linejoin="round"/></svg>
<svg style="left:680px;top:119px" width="10" height="5" viewBox="0 0 10 5"><path d="M0 0H10L5.0 5Z" fill="#232627"/></svg>
<div class="a" style="left:698px;top:111px;width:1px;height:22px;background:#c9c9c9;"></div>
<svg style="left:704px;top:113px" width="18" height="17" viewBox="0 0 18 17"><rect x="1.5" y="3.5" width="13" height="12" fill="url(#gwin)" stroke="#8c7642"/><rect x="1" y="3" width="14" height="2.6" fill="#3f93d8"/><path d="M9 9L14 4" stroke="#555" stroke-width="1"/><path d="M12 6L15.5 2.5Q17 1 17.5 2.5Q18 3.5 16.5 5L13.5 8Z" fill="#3aa040" stroke="#2a7a30" stroke-width="0.7"/></svg>
<svg style="left:674px;top:143px" width="17" height="16" viewBox="0 0 17 16"><circle cx="6.3" cy="5.8" r="4.6" fill="none" stroke="#555" stroke-width="1.8"/><path d="M9.8 9.3L15.6 14.8" stroke="#555" stroke-width="2"/></svg>
<div class="a" style="left:708.5px;top:142.5px;width:2px;height:2px;background:#c4baa6;"></div><div class="a" style="left:708.5px;top:146.6px;width:2px;height:2px;background:#c4baa6;"></div><div class="a" style="left:708.5px;top:150.7px;width:2px;height:2px;background:#c4baa6;"></div><div class="a" style="left:708.5px;top:154.8px;width:2px;height:2px;background:#c4baa6;"></div>
<svg style="left:719px;top:142px" width="16" height="15" viewBox="0 0 16 15"><rect x="1.5" y="3.5" width="11" height="10" fill="#e6f2fb" stroke="#8c7642"/><rect x="1" y="3" width="12" height="2.2" fill="#4a90d8"/><path d="M1.5 9H12.5M6 5V13.5" stroke="#8c7642"/><path d="M12.3 0.5Q13.224 2.876 15.600000000000001 3.8Q13.224 4.724 12.3 7.1Q11.376000000000001 4.724 9.0 3.8Q11.376000000000001 2.876 12.3 0.5Z" fill="#fff8dc" stroke="#b58b1c" stroke-width="1.4" stroke-linejoin="round"/></svg>
<div class="a" style="left:741px;top:137px;width:1px;height:25px;background:#c8c8c8;"></div>
<div class="a" style="left:747px;top:139px;width:144px;height:21px;background:#d9d9d9;border:1px solid #b5b5b5;border-radius:4px;"></div>
<svg style="left:748px;top:142px" width="18" height="15" viewBox="0 0 18 15"><path d="M2.0 3.5q0-2 2-2h2.5q1.5 0 2 1.5h0.5q1 0 1 1v8.5q0 1-1 1h-6q-1 0-1-1z" fill="url(#gfold)" stroke="#c98432" stroke-width="1"/><rect x="7.5" y="4.5" width="8" height="9" fill="#eef3f8" stroke="#8e7c46" stroke-width="1"/><path d="M9.5 6V11.5H12.5M9.5 9.0H12.5" fill="none" stroke="#2e9a4e" stroke-width="1.2"/><rect x="12.8" y="7.5" width="1.2" height="1.2" fill="#2e9a4e"/><rect x="12.8" y="10.5" width="1.2" height="1.2" fill="#2e9a4e"/></svg>
<div class="t" style="left:773.6px;top:142px;font-size:13.85px;color:#26292d;">Test Management</div>
<svg style="left:897px;top:140px" width="15" height="18" viewBox="0 0 15 18"><circle cx="7.5" cy="3.6" r="2.8" fill="#f6d36a" stroke="#c8a032" stroke-width="0.8"/><path d="M2 12Q0 7 4 5M13 12Q15 7 11 5" fill="none" stroke="#c8a85a" stroke-width="0.9"/><path d="M7.5 6.5V10.5M4 13V10.5H11V13" fill="none" stroke="#2a62b0" stroke-width="1"/><circle cx="4" cy="14.5" r="2" fill="#fff" stroke="#2a62b0" stroke-width="1.1"/><circle cx="11" cy="14.5" r="2" fill="#fff" stroke="#2a62b0" stroke-width="1.1"/></svg>
<div class="t" style="left:921.2px;top:142px;font-size:13.1px;color:#26292d;letter-spacing:-0.386px;">Spy</div>
<svg style="left:955px;top:141px" width="17" height="17" viewBox="0 0 17 17"><path d="M3 2L6 5M14 2L11 5M1 8H5M16 8H12M2 14L5 11M15 14L12 11M8.5 1V4" stroke="#2a6a5a" stroke-width="1.1"/><ellipse cx="8.5" cy="9" rx="4" ry="5" fill="#8cbf7a" stroke="#2a6a5a" stroke-width="1" transform="rotate(-35 8.5 9)"/><ellipse cx="8" cy="8" rx="1.6" ry="2.5" fill="#c8e6a8" transform="rotate(-35 8 8)"/></svg>
<div class="t" style="left:980.0px;top:142px;font-size:13.81px;color:#26292d;">Test Debugging</div>
<svg style="left:71px;top:174px" width="17" height="15" viewBox="0 0 17 15"><path d="M1.5 3.5q0-2 2-2h2.5q1.5 0 2 1.5h0.5q1 0 1 1v7.5q0 1-1 1h-6q-1 0-1-1z" fill="url(#gfold)" stroke="#c98432" stroke-width="1"/><rect x="7.5" y="3.5" width="8" height="10" fill="#eef3f8" stroke="#8e7c46" stroke-width="1"/><path d="M9.5 5V11.5H12.5M9.5 8.5H12.5" fill="none" stroke="#2e9a4e" stroke-width="1.2"/><rect x="12.8" y="7.0" width="1.2" height="1.2" fill="#2e9a4e"/><rect x="12.8" y="10.5" width="1.2" height="1.2" fill="#2e9a4e"/></svg>
<div class="a" style="left:240px;top:176px;width:10px;height:4px;border:1.3px solid #232627;"></div><div class="a" style="left:262px;top:176px;width:10px;height:10px;border:1.3px solid #232627;border-top-width:2.5px;"></div>
<svg style="left:234px;top:204px" width="18" height="18" viewBox="0 0 18 18"><path d="M2.5 3.5q0-2 2-2h2.5q1.5 0 2 1.5h0.5q1 0 1 1v7.5q0 1-1 1h-6q-1 0-1-1z" fill="url(#gfold)" stroke="#c98432" stroke-width="1"/><rect x="8.0" y="6.5" width="8" height="9" fill="#eef3f8" stroke="#b5a77a" stroke-width="1"/><path d="M10.0 8V13.5H13.0M10.0 11.0H13.0" fill="none" stroke="#2e9a4e" stroke-width="1.2"/><rect x="13.3" y="9.5" width="1.2" height="1.2" fill="#2e9a4e"/><rect x="13.3" y="12.5" width="1.2" height="1.2" fill="#2e9a4e"/><path d="M2 16L12 5" stroke="#1e62b0" stroke-width="2.2"/><path d="M10 5Q11 1 15 2L13 4L14 5L16 3Q17 7 12 7Z" fill="#1e62b0"/><path d="M4 15L1 16.5L2 13Z" fill="#1e62b0"/></svg>
<svg style="left:257px;top:205px" width="15" height="16" viewBox="0 0 15 16"><rect x="1.5" y="1.5" width="12" height="13" fill="#f3f8fb" stroke="#8c7642"/><rect x="1" y="1" width="13" height="2.8" fill="#f0a020"/><rect x="1" y="1" width="13" height="1" fill="#c05a00"/><path d="M7.5 4V14.5" stroke="#a89060"/><path d="M3.5 6.5H6M3.5 8.5H6M9 6.5H11.5M9 8.5H11.5" stroke="#8c7642" stroke-width="1"/></svg>
<svg style="left:133px;top:248px" width="16" height="17" viewBox="0 0 16 17"><rect x="1.5" y="3.5" width="11" height="12" fill="#eef3f8" stroke="#a8996a"/><path d="M3.5 5V13.5H8M3.5 9H8M3.5 11.3H8M3.5 6.5H8" fill="none" stroke="#2e9a4e" stroke-width="1"/><path d="M12 0.7999999999999998Q12.896 3.104 15.2 4Q12.896 4.896 12 7.2Q11.104 4.896 8.8 4Q11.104 3.104 12 0.7999999999999998Z" fill="#fff8dc" stroke="#b58b1c" stroke-width="1.4" stroke-linejoin="round"/></svg>
<svg style="left:158px;top:254px" width="10" height="5" viewBox="0 0 10 5"><path d="M0 0H10L5.0 5Z" fill="#232627"/></svg>
<svg style="left:176px;top:247px" width="17" height="17" viewBox="0 0 17 17"><circle cx="8.5" cy="8.5" r="7.6" fill="#fff" stroke="#3a9a4a" stroke-width="1.2"/><circle cx="8.5" cy="8.5" r="6" fill="url(#ggreen)"/><path d="M6.5 4.5L12 8.5L6.5 12.5Z" fill="#fff"/></svg>
<svg style="left:202px;top:254px" width="10" height="5" viewBox="0 0 10 5"><path d="M0 0H10L5.0 5Z" fill="#232627"/></svg>
<svg style="left:227px;top:246px" width="19" height="20" viewBox="0 0 19 20"><path d="M3 4V16" stroke="#3a7ab0" stroke-width="1.1"/><path d="M0.8 14L3 17L5.2 14Z" fill="#3a7ab0"/><text x="5.6" y="9.8" font-family="Liberation Sans" font-weight="bold" font-size="11" fill="#1a8a7a">a</text><text x="10" y="18" font-family="Liberation Sans" font-weight="bold" font-size="10.5" fill="#8a2a9a">z</text></svg>
<svg style="left:83px;top:282px" width="13" height="10" viewBox="0 0 13 10"><path d="M1.5 4.5L5 8L11.5 1.5" fill="none" stroke="#fff" stroke-width="1.8"/></svg>
<svg style="left:101px;top:280px" width="12" height="14" viewBox="0 0 12 14"><rect x="0.7" y="0.7" width="10.6" height="12.6" fill="#f4f8fb" stroke="#c0902a" stroke-width="1.2"/><path d="M2.8 2V11.5H8M2.8 5H8M2.8 8.5H8" fill="none" stroke="#2e9a4e" stroke-width="1.1"/><rect x="9" y="4.5" width="1.1" height="1.1" fill="#2e9a4e"/><rect x="9" y="8" width="1.1" height="1.1" fill="#2e9a4e"/><rect x="9" y="11" width="1.1" height="1.1" fill="#2e9a4e"/></svg>
<svg style="left:235px;top:280px" width="14" height="14" viewBox="0 0 14 14"><circle cx="7" cy="7" r="6.5" fill="url(#ggreen)" stroke="#1f7a30" stroke-width="0.9"/><path d="M5 3.2L11 7L5 10.8Z" fill="#fff"/></svg>
<svg style="left:255px;top:280px" width="14" height="14" viewBox="0 0 14 14"><circle cx="7" cy="7" r="6.6" fill="url(#gred)" stroke="#e03a3a" stroke-width="0.7"/></svg>
<svg style="left:215px;top:448px" width="16" height="17" viewBox="0 0 16 17"><rect x="0.7" y="3.7" width="10.6" height="12.6" fill="#eaf2fa" stroke="#aca27a" stroke-width="1"/><path d="M11.8 0.9000000000000004Q12.724 3.2760000000000002 15.100000000000001 4.2Q12.724 5.1240000000000006 11.8 7.5Q10.876000000000001 5.1240000000000006 8.5 4.2Q10.876000000000001 3.2760000000000002 11.8 0.9000000000000004Z" fill="#fff8dc" stroke="#b58b1c" stroke-width="1.4" stroke-linejoin="round"/></svg>
<svg style="left:237px;top:455px" width="10" height="5" viewBox="0 0 10 5"><path d="M0 0H10L5.0 5Z" fill="#232627"/></svg>
<svg style="left:256px;top:448px" width="16" height="14" viewBox="0 0 16 14"><path d="M1.5 5.5q0-2 2-2h2.5q1.5 0 2 1.5h5.5q1 0 1 1v6.5q0 1-1 1h-11q-1 0-1-1z" fill="url(#gfold)" stroke="#c98432" stroke-width="1"/><path d="M11.8 0.30000000000000027Q12.724 2.676 15.100000000000001 3.6Q12.724 4.524 11.8 6.9Q10.876000000000001 4.524 8.5 3.6Q10.876000000000001 2.676 11.8 0.30000000000000027Z" fill="#fff8dc" stroke="#b58b1c" stroke-width="1.4" stroke-linejoin="round"/></svg>
<svg style="left:100px;top:504px" width="15" height="18" viewBox="0 0 15 18"><path d="M1.5 1.5H9.5L13.5 5.5V16.5H1.5Z" fill="#fdfaf4" stroke="#2e2e2e" stroke-width="1.2"/><path d="M9.5 1.5V5.5H13.5" fill="#fff" stroke="#2e2e2e" stroke-width="1"/><rect x="2" y="13" width="11" height="3" fill="#2a2f72"/><rect x="5" y="14" width="1.2" height="1.2" fill="#fff"/><rect x="7.5" y="14" width="1.2" height="1.2" fill="#fff"/><path d="M3.5 4.5H5M3.5 7.5H5M6.5 7.5H8M3.5 10H5M10 10H11.5" stroke="#777" stroke-width="1"/></svg>
<svg style="left:216px;top:649px" width="16" height="17" viewBox="0 0 16 17"><rect x="0.7" y="3.7" width="10.6" height="12.6" fill="#eaf2fa" stroke="#aca27a" stroke-width="1"/><path d="M11.8 0.9000000000000004Q12.724 3.2760000000000002 15.100000000000001 4.2Q12.724 5.1240000000000006 11.8 7.5Q10.876000000000001 5.1240000000000006 8.5 4.2Q10.876000000000001 3.2760000000000002 11.8 0.9000000000000004Z" fill="#fff8dc" stroke="#b58b1c" stroke-width="1.4" stroke-linejoin="round"/></svg>
<svg style="left:239px;top:656px" width="10" height="5" viewBox="0 0 10 5"><path d="M0 0H10L5.0 5Z" fill="#232627"/></svg>
<svg style="left:258px;top:649px" width="16" height="14" viewBox="0 0 16 14"><path d="M1.5 5.5q0-2 2-2h2.5q1.5 0 2 1.5h5.5q1 0 1 1v6.5q0 1-1 1h-11q-1 0-1-1z" fill="url(#gfold)" stroke="#c98432" stroke-width="1"/><path d="M11.8 0.30000000000000027Q12.724 2.676 15.100000000000001 3.6Q12.724 4.524 11.8 6.9Q10.876000000000001 4.524 8.5 3.6Q10.876000000000001 2.676 11.8 0.30000000000000027Z" fill="#fff8dc" stroke="#b58b1c" stroke-width="1.4" stroke-linejoin="round"/></svg>
<svg style="left:254px;top:683px" width="11" height="7" viewBox="0 0 11 7"><path d="M0.8 0.8L3.6 3.3L0.8 5.8M5 0.8L7.8 3.3L5 5.8" fill="none" stroke="#2b2b2b" stroke-width="1.5"/></svg>
<div class="t" style="left:262px;top:685px;font-size:10.5px;color:#31363b;">2</div>
<svg style="left:97px;top:711px" width="15" height="14" viewBox="0 0 15 14"><path d="M1.0 3.5q0-2 2-2h2.5q1.5 0 2 1.5h5.5q1 0 1 1v7.5q0 1-1 1h-11q-1 0-1-1z" fill="url(#gfold)" stroke="#c98432" stroke-width="1"/></svg>
<svg style="left:99px;top:734px" width="14" height="18" viewBox="0 0 14 18"><path d="M1.5 1.5H9L12.5 5V16.5H1.5Z" fill="#f8f4ec" stroke="#555" stroke-width="1.2"/><path d="M9 1.5V5H12.5" fill="#fff" stroke="#555"/><path d="M3.5 5H5M3.5 9H5M8 9H9.5M3.5 13H5M8 13H9.5" stroke="#999"/></svg>
<svg style="left:296px;top:173px" width="13" height="16" viewBox="0 0 13 16"><path d="M0.7 0.7H8.3L12.3 4.7V15.3H0.7Z" fill="#fbfcff" stroke="#6a8a3a" stroke-width="1.2"/><path d="M8.3 0.7V4.7H12.3" fill="none" stroke="#6a8a3a" stroke-width="1"/><text x="2.2" y="12.3" font-family="Liberation Sans" font-weight="bold" font-size="10" fill="#22b04a">P</text></svg>
<svg style="left:452px;top:176px" width="11" height="11" viewBox="0 0 11 11"><path d="M0.8 0.8L10.2 10.2M10.2 0.8L0.8 10.2" stroke="#2b2b2b" stroke-width="1.2"/></svg>
<div class="a" style="left:1048px;top:176px;width:10px;height:4px;border:1.3px solid #232627;"></div><div class="a" style="left:1070px;top:176px;width:10px;height:10px;border:1.3px solid #232627;border-top-width:2.5px;"></div>
<svg style="left:293px;top:508px" width="17" height="18" viewBox="0 0 17 18"><rect x="2" y="1" width="14" height="2.5" fill="#7c9ac8"/><path d="M3 3V15.5H14.5V3" fill="#f5f8fd" stroke="#c8b47a" stroke-width="1"/><path d="M5 5.5H7M8 5.5H12.5M8 8.5H12.5M8 11.5H12.5M8 14H12.5" stroke="#7890c0" stroke-width="1.1"/><rect x="5" y="5" width="2.5" height="1.3" fill="#00a000"/><rect x="5" y="8" width="2.5" height="1.3" fill="#ff1010"/><rect x="1" y="9.5" width="7.5" height="8" fill="#0a9a3a"/><path d="M2.5 13L4.3 15.5L7.3 11" fill="none" stroke="#fff" stroke-width="1.5"/></svg>
<svg style="left:393px;top:512px" width="11" height="11" viewBox="0 0 11 11"><path d="M0.8 0.8L10.2 10.2M10.2 0.8L0.8 10.2" stroke="#2b2b2b" stroke-width="1.2"/></svg>
<svg style="left:415px;top:508px" width="17" height="17" viewBox="0 0 17 17"><rect x="1.5" y="1" width="12" height="2" fill="#7c9ac8"/><path d="M2 2.5V15.5H12.5V2.5" fill="#f5f8fd" stroke="#b09a5a" stroke-width="1"/><rect x="3.5" y="6" width="2.5" height="2.5" fill="#e82020"/><rect x="3.5" y="10" width="2.5" height="2.5" fill="#10a020"/><path d="M7 5H11M7 7H11" stroke="#7890c0"/><circle cx="12" cy="12.5" r="3.4" fill="#fff" stroke="#2a62b0" stroke-width="1.3"/><path d="M11.3 10.8L12.3 13L13.2 11.5" stroke="#2a62b0" fill="none" stroke-width="0.9"/></svg>
<svg style="left:529px;top:508px" width="19" height="17" viewBox="0 0 19 17"><rect x="4" y="1" width="9" height="13" fill="#eef8fd"/><path d="M4 1.5H13.5V11" fill="none" stroke="#c8b070" stroke-width="1.2"/><path d="M4 13.5H10" stroke="#a8a088" stroke-width="1"/><circle cx="1.8" cy="3.5" r="0.8" fill="#3a7ac0"/><circle cx="4" cy="3.5" r="0.8" fill="#1a2a5a"/><circle cx="1.8" cy="5.5" r="0.8" fill="#3a7ac0"/><circle cx="4" cy="5.5" r="0.8" fill="#1a2a5a"/><circle cx="1.8" cy="7.5" r="0.8" fill="#3a7ac0"/><circle cx="4" cy="7.5" r="0.8" fill="#1a2a5a"/><circle cx="1.8" cy="9.5" r="0.8" fill="#3a7ac0"/><circle cx="4" cy="9.5" r="0.8" fill="#1a2a5a"/><circle cx="1.8" cy="11.5" r="0.8" fill="#3a7ac0"/><circle cx="4" cy="11.5" r="0.8" fill="#1a2a5a"/><path d="M6.5 4.5H11M6.5 6.5H11M6.5 8.5H10M6.5 10.5H9" stroke="#7a94c8" stroke-width="1"/><path d="M10 8.5L16.5 14.5M16.5 8.5L10 14.5M9.5 11.5H17.5M13.3 7.5V16" stroke="#123a2a" stroke-width="0.9"/><circle cx="13.3" cy="11.5" r="2.5" fill="#a8e040" stroke="#1a8a7a" stroke-width="0.9"/></svg>
<svg style="left:681px;top:511px" width="13" height="13" viewBox="0 0 13 13"><rect x="0.6" y="0.6" width="11" height="11" fill="#f2f9ff" stroke="#a88f48" stroke-width="1.2"/><rect x="0" y="0" width="12" height="3.2" rx="0.6" fill="#3f7fc4"/><rect x="1.2" y="1.1" width="9.6" height="1" fill="#7cc0ec"/></svg>
<div class="a" style="left:1048px;top:512px;width:10px;height:4px;border:1.3px solid #232627;"></div><div class="a" style="left:1070px;top:512px;width:10px;height:10px;border:1.3px solid #232627;border-top-width:2.5px;"></div>
<svg style="left:701px;top:543px" width="10" height="5" viewBox="0 0 10 5"><path d="M0 0H10L5.0 5Z" fill="#232627"/></svg>
<div class="a" style="left:720px;top:534px;width:1px;height:24px;background:#c8c8c8;"></div>
<svg style="left:728px;top:537px" width="14" height="15" viewBox="0 0 14 15"><path d="M4 1H9V7H12.5L6.5 13L0.5 7H4Z" transform="translate(0.5,0.5)" fill="url(#garrow)" stroke="#d09a20" stroke-width="1.1" stroke-linejoin="round"/></svg>
<svg style="left:750px;top:537px" width="14" height="15" viewBox="0 0 14 15"><path d="M4 1H9V7H12.5L6.5 13L0.5 7H4Z" transform="translate(0.5,14) scale(1,-1)" fill="url(#garrow)" stroke="#d09a20" stroke-width="1.1" stroke-linejoin="round"/></svg>
<div class="a" style="left:771px;top:534px;width:1px;height:24px;background:#c8c8c8;"></div>
<svg style="left:779px;top:538px" width="15" height="15" viewBox="0 0 15 15"><rect x="0.5" y="0.5" width="9.5" height="9.5" fill="#e6eef8" stroke="#8aa0c8"/><rect x="3.5" y="3.5" width="10.5" height="10.5" fill="#f2f7fc" stroke="#7a90b8"/><path d="M8.8 5.5V12.5M5.3 9H12.3" stroke="#1a4a9a" stroke-width="1.3"/></svg>
<svg style="left:801px;top:538px" width="15" height="15" viewBox="0 0 15 15"><rect x="0.5" y="0.5" width="9.5" height="9.5" fill="#e6eef8" stroke="#8aa0c8"/><rect x="3.5" y="3.5" width="10.5" height="10.5" fill="#f2f7fc" stroke="#7a90b8"/><path d="M5.3 9H12.3" stroke="#1a4a9a" stroke-width="1.3"/></svg>
<div class="a" style="left:822px;top:534px;width:1px;height:24px;background:#c8c8c8;"></div>
<svg style="left:829px;top:538px" width="17" height="14" viewBox="0 0 17 14"><path d="M2 5Q1 7 2 9" stroke="#666" fill="none"/><rect x="3.5" y="0.5" width="12" height="12" fill="#f0f0f0" stroke="#555"/><rect x="5" y="2" width="9" height="9" fill="url(#gimg)"/></svg>
<svg style="left:851px;top:537px" width="17" height="17" viewBox="0 0 17 17"><rect x="0.5" y="2.5" width="15" height="13" fill="#fff" stroke="#b8b8b8"/><path d="M0.5 5H15.5M0.5 13H15.5" stroke="#b8b8b8"/><path d="M2.5 3.5V4.3M5.5 3.5V4.3M8.5 3.5V4.3M11.5 3.5V4.3M2.5 14V14.8M5.5 14V14.8M8.5 14V14.8M11.5 14V14.8" stroke="#888" stroke-width="1.2"/><path d="M6 0.8H10V6H13L8 11L3 6H6Z" fill="url(#garrow)" stroke="#d09a20" stroke-width="1"/></svg>
<div class="a" style="left:873px;top:534px;width:1px;height:24px;background:#c8c8c8;"></div>
<svg style="left:880px;top:537px" width="17" height="17" viewBox="0 0 17 17"><path d="M5 0.5H11.5L16.5 5.5V11.5L11.5 16.5H5L0.5 11.5V5.5Z" fill="#f0a0a0" stroke="#e07a7a" stroke-width="0.8"/><path d="M3.5 8.5L7 12.5L14 4" fill="none" stroke="#20a040" stroke-width="2.4"/></svg>
<svg style="left:902px;top:538px" width="16" height="15" viewBox="0 0 16 15"><g opacity="0.75"><rect x="1.5" y="3" width="10" height="9.5" fill="url(#gimg)" stroke="#a8b0b8"/></g><path d="M11 1.6Q11.952 4.048 14.4 5Q11.952 5.952 11 8.4Q10.048 5.952 7.6 5Q10.048 4.048 11 1.6Z" fill="#fff8dc" stroke="#d6c08a" stroke-width="1.4" stroke-linejoin="round"/></svg>
<div class="a" style="left:924px;top:534px;width:1px;height:24px;background:#c8c8c8;"></div>
<svg style="left:931px;top:537px" width="15" height="17" viewBox="0 0 15 17"><path d="M0.8 1H14.2L9 7.5V15.5L6 13.5V7.5Z" fill="#d8e8f8" stroke="#4a88c8" stroke-width="1.2" stroke-linejoin="round"/></svg>
<svg style="left:956px;top:543px" width="10" height="5" viewBox="0 0 10 5"><path d="M0 0H10L5.0 5Z" fill="#232627"/></svg>
<svg style="left:976px;top:538px" width="15" height="16" viewBox="0 0 15 16"><path d="M1.5 11L8 2.5Q9 1 10.5 2L12 3Q13 4 12 5.5L5.5 13.5Q4.5 14.5 3.5 13.5Z" fill="#ead9b8" stroke="#a89068" stroke-width="0.9"/><path d="M7 15H14" stroke="#a89068"/></svg>
<svg style="left:996px;top:537px" width="17" height="17" viewBox="0 0 17 17"><path d="M1.5 9V15.5H15.5V9H12.5V12.5H4.5V9Z" fill="#cfe0f2" stroke="#4a88c8" stroke-width="1"/><path d="M6 10L13 3M9.5 2.5H13.5V6.5" fill="none" stroke="#3a80c8" stroke-width="1.2"/></svg>
<svg style="left:1018px;top:537px" width="17" height="17" viewBox="0 0 17 17"><path d="M1.5 9V15.5H15.5V9H12.5V12.5H4.5V9Z" fill="#cfe0f2" stroke="#4a88c8" stroke-width="1"/><path d="M4 3L11 10M7.5 10.5H11.5V6.5" fill="none" stroke="#3a80c8" stroke-width="1.2"/></svg>
<svg style="left:1041px;top:537px" width="16" height="16" viewBox="0 0 16 16"><path d="M6.5 3.5H2V13.5H12V9" fill="none" stroke="#111" stroke-width="1.6"/><path d="M7 8.5L13 2.5" stroke="#111" stroke-width="1.6"/><path d="M9 1H14.5V6.5Z" fill="#111"/></svg>
<svg style="left:1075px;top:536px" width="7" height="18" viewBox="0 0 7 18"><circle cx="3.3" cy="3" r="2" fill="none" stroke="#555" stroke-width="1"/><circle cx="3.3" cy="9" r="2" fill="none" stroke="#555" stroke-width="1"/><circle cx="3.3" cy="15" r="2" fill="none" stroke="#555" stroke-width="1"/></svg>
<svg style="left:565px;top:634px" width="14" height="21" viewBox="0 0 14 21"><path d="M1 1V16L4.6 12.6L7.2 18.6L9.6 17.6L7.1 11.8H12Z" fill="#000" stroke="#fff" stroke-width="1.1" stroke-linejoin="round"/></svg>
<div class="a" style="left:65px;top:57px;width:1px;height:816px;background:#c9cbcd;"></div>
<div class="a" style="left:1093px;top:57px;width:1px;height:816px;background:#c9cbcd;"></div>
<div class="a" style="left:65px;top:872px;width:1029px;height:1px;background:#c9cbcd;"></div>
</body></html>
